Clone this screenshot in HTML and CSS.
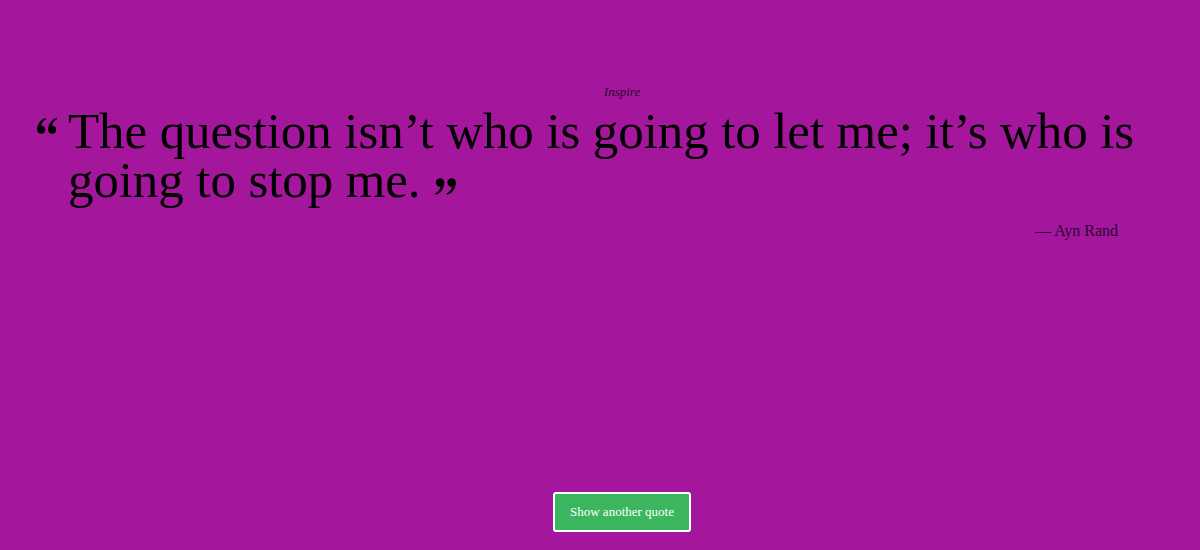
FILE: index.html
```html
<!DOCTYPE html>
<html>
<head>
<meta charset="utf-8">
<link rel="stylesheet" href="styles.css">
</head>
<body>
<main class="page">
  <div class="column">
    <h1 class="title">Inspire</h1>
    <blockquote class="quote">
      <p class="quote-text"><svg class="qmark open" viewBox="0 0 22 16" width="22" height="16" aria-hidden="true"><g fill="#000"><circle cx="4.2" cy="11.8" r="4"/><path d="M0.3,11.6 C0.3,6 3,2 8.6,0 L9.1,1.2 C5.6,3 4.1,5.6 4.2,8 Z"/><circle cx="15.2" cy="11.8" r="4"/><path d="M11.3,11.6 C11.3,6 14,2 19.6,0 L20.1,1.2 C16.6,3 15.1,5.6 15.2,8 Z"/></g></svg>The question isn&rsquo;t who is going to let me; it&rsquo;s who is going to stop me.<svg class="qmark close" viewBox="0 0 22 16" width="23" height="17" aria-hidden="true"><g fill="#000" transform="rotate(180 11 8)"><circle cx="4.2" cy="11.8" r="4"/><path d="M0.3,11.6 C0.3,6 3,2 8.6,0 L9.1,1.2 C5.6,3 4.1,5.6 4.2,8 Z"/><circle cx="15.2" cy="11.8" r="4"/><path d="M11.3,11.6 C11.3,6 14,2 19.6,0 L20.1,1.2 C16.6,3 15.1,5.6 15.2,8 Z"/></g></svg></p>
      <p class="author">&mdash; Ayn Rand</p>
    </blockquote>
    <div class="spacer"></div>
    <div class="actions">
      <button class="btn">Show another quote</button>
    </div>
  </div>
</main>
</body>
</html>
```

FILE: styles.css
```css
html, body {
  margin: 0;
  padding: 0;
  height: 100%;
}
body {
  background: #a4179d;
  color: #000;
  font-family: "Liberation Serif", serif;
}
.page {
  height: 550px;
  display: flex;
  justify-content: flex-end;
}
.column {
  width: 1156px;
  display: flex;
  flex-direction: column;
  box-sizing: border-box;
  padding-top: 84px;
}
.title {
  margin: 0;
  text-align: center;
  font-size: 13px;
  font-style: italic;
  font-weight: normal;
  line-height: 16px;
  color: #2a0630;
}
.quote {
  margin: 7px 0 0 0;
  padding: 0 30px 0 24px;
}
.quote-text {
  position: relative;
  margin: 0;
  font-size: 51px;
  line-height: 49px;
  letter-spacing: -0.1px;
  color: #000;
}
.qmark {
  display: inline-block;
}
.qmark.open {
  position: absolute;
  left: -31px;
  top: 11px;
}
.qmark.close {
  margin-left: 13px;
  vertical-align: 2px;
}
.author {
  margin: 16px 52px 0 0;
  text-align: right;
  font-size: 16px;
  line-height: 20px;
  color: #2a0630;
}
.spacer {
  flex: 1;
}
.actions {
  display: flex;
  justify-content: center;
  padding-bottom: 18px;
}
.btn {
  background: #3bb55e;
  color: #fff;
  font-family: "Liberation Serif", serif;
  font-size: 13px;
  border: 2px solid #fff;
  border-radius: 3px;
  width: 138px;
  height: 40px;
  padding: 0;
  cursor: pointer;
}
```
